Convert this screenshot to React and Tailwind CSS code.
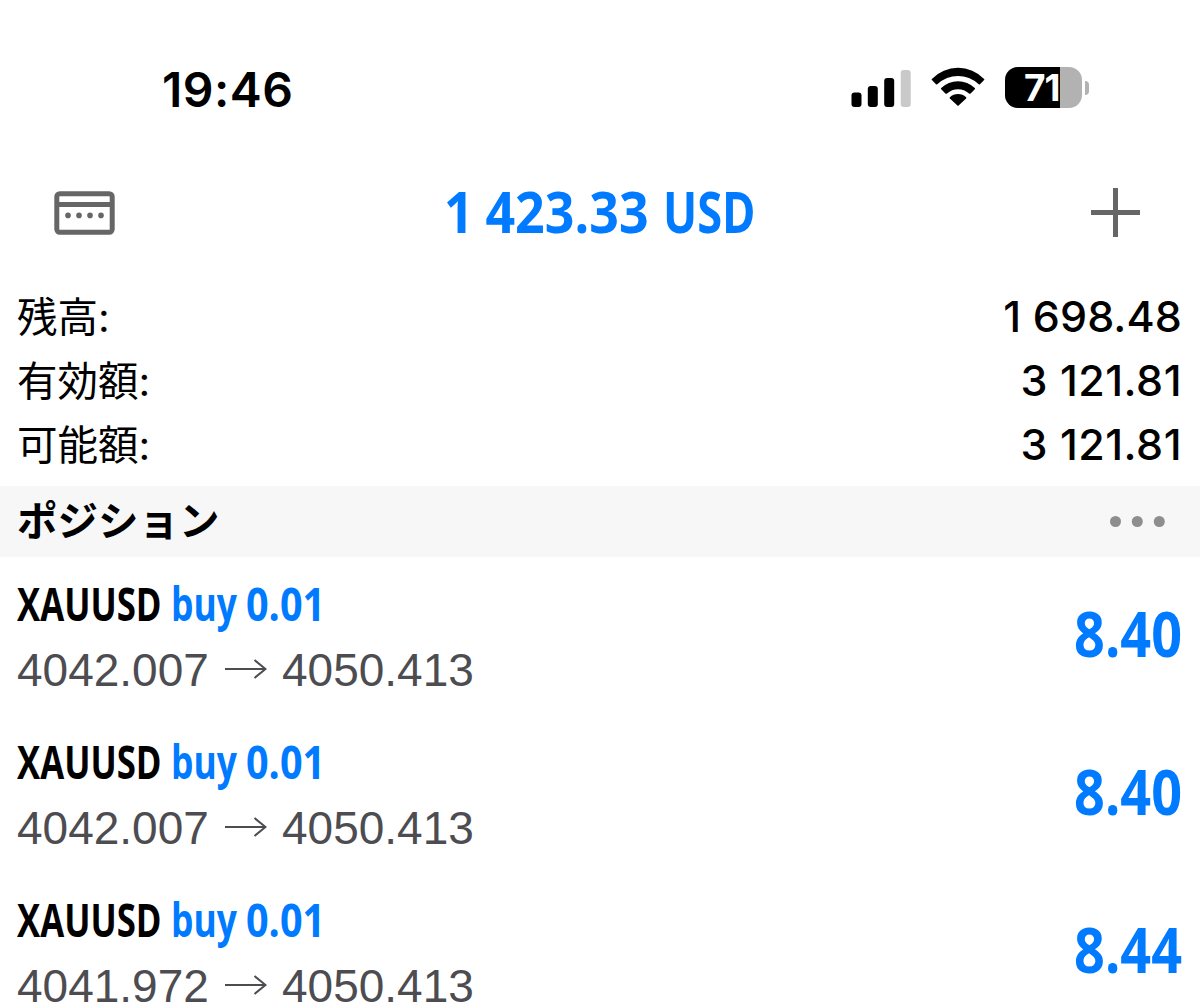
import React from 'react';

const account = [
  { label: '残高', value: '1 698.48', spacing: 'tracking-[0.1px]' },
  { label: '有効額', value: '3 121.81', spacing: 'tracking-[0.5px]' },
  { label: '可能額', value: '3 121.81', spacing: 'tracking-[0.5px]' },
];

const positions = [
  { id: 1, symbol: 'XAUUSD', side: 'buy', volume: '0.01', open: '4042.007', current: '4050.413', profit: '8.40' },
  { id: 2, symbol: 'XAUUSD', side: 'buy', volume: '0.01', open: '4042.007', current: '4050.413', profit: '8.40' },
  { id: 3, symbol: 'XAUUSD', side: 'buy', volume: '0.01', open: '4041.972', current: '4050.413', profit: '8.44' },
];

const SignalIcon = () => (
  <svg width="60" height="38" viewBox="0 0 60 38">
    <rect x="0.5" y="23.5" width="10" height="14.5" rx="3" fill="#000" />
    <rect x="16.8" y="17" width="10" height="21" rx="3" fill="#000" />
    <rect x="33.2" y="9" width="10" height="29" rx="3" fill="#000" />
    <rect x="49.7" y="1" width="10" height="37" rx="3" fill="#c9c9c9" />
  </svg>
);

const WifiIcon = () => (
  <svg className="mb-[1px]" width="54" height="40" viewBox="0 1 54 40" fill="#000">
    <path d="M0.9 12.9 A36.4 36.4 0 0 1 53.1 12.9 Q53.6 13.5 53.1 14.1 L49 18.2 Q48.2 18.9 47.4 18.1 A29.5 29.5 0 0 0 6.6 18.1 Q5.8 18.9 5 18.2 L0.9 14.1 Q0.4 13.5 0.9 12.9 Z" />
    <path d="M10.2 22.1 A24 24 0 0 1 43.8 22.1 Q44.3 22.7 43.8 23.3 L39.6 27.4 Q38.8 28.1 38 27.4 A16.3 16.3 0 0 0 16 27.4 Q15.2 28.1 14.4 27.4 L10.2 23.3 Q9.7 22.7 10.2 22.1 Z" />
    <path d="M18.9 31.2 A11.6 11.6 0 0 1 35.1 31.2 Q35.7 31.8 35.1 32.4 L27.6 39.6 Q27 40.1 26.4 39.6 L18.9 32.4 Q18.3 31.8 18.9 31.2 Z" />
  </svg>
);

const Battery = () => (
  <div className="flex items-center">
    <div className="h-[41px] w-[77px] overflow-hidden rounded-[13px] bg-[#b2b2b2]">
      <div className="flex h-full w-[55px] items-center bg-black pl-[19px]">
        <span className="shrink-0 text-[37px] leading-none font-bold tracking-[-1px] text-white">71</span>
      </div>
    </div>
    <div className="ml-[3px] h-[14px] w-[4px] rounded-r-full bg-[#b2b2b2]" />
  </div>
);

const AccountsIcon = () => (
  <svg className="mt-[2px]" width="61" height="44" viewBox="0 0 61 44">
    <rect x="2.8" y="2.7" width="55.4" height="38.6" rx="3" fill="none" stroke="#666" strokeWidth="5" />
    <rect x="3" y="11" width="55" height="5" fill="#666" />
    {[14, 25, 36, 47].map((x) => (
      <circle key={x} cx={x} cy="24.4" r="2.8" fill="#666" />
    ))}
  </svg>
);

const PlusIcon = () => (
  <svg width="49" height="49" viewBox="0 0 49 49">
    <path d="M24.5 0V49M0 24.5H49" stroke="#666" strokeWidth="5" />
  </svg>
);

const MoreIcon = () => (
  <svg width="55" height="11" viewBox="0 0 55 11" fill="#8e8e8e">
    <circle cx="5.5" cy="5.5" r="5.5" />
    <circle cx="27.3" cy="5.5" r="5.5" />
    <circle cx="49.3" cy="5.5" r="5.5" />
  </svg>
);

const ArrowIcon = () => (
  <svg className="mb-[2px]" width="42" height="20" viewBox="0 0 42 20" fill="none" stroke="#4c4c51" strokeWidth="2">
    <path d="M0 10H40M29.5 1L40.5 10L29.5 19" />
  </svg>
);

const Position = ({ item }) => (
  <div className="flex h-[158px] shrink-0 justify-between pr-[18px] pl-[17px]">
    <div className="pt-[13px]">
      <div className="flex h-[66px] items-center font-['Open_Sans',sans-serif] text-[46px] leading-none font-bold whitespace-nowrap">
        <span className="w-[154px] origin-left scale-x-[0.755]">{item.symbol}</span>
        <span className="w-[75px] origin-left scale-x-[0.77] text-[#007aff]">{item.side}</span>
        <span className="origin-left scale-x-[0.86] text-[#007aff]">{item.volume}</span>
      </div>
      <div className="flex h-[68px] items-center font-['Liberation_Sans',sans-serif] text-[46px] leading-none text-[#4c4c51]">
        <span className="w-[208px]">{item.open}</span>
        <ArrowIcon />
        <span className="ml-[15px]">{item.current}</span>
      </div>
    </div>
    <div className="flex h-[152px] items-center">
      <span className="origin-right scale-x-[0.87] font-['Open_Sans',sans-serif] text-[62px] leading-none font-bold text-[#007aff]">
        {item.profit}
      </span>
    </div>
  </div>
);

const App = () => {
  return (
    <div className="flex h-[1006px] w-[1200px] flex-col overflow-hidden bg-white font-['Inter','Noto_Sans_CJK_JP',sans-serif] text-black">
      {/* Status bar */}
      <div className="flex h-[178px] shrink-0 items-center justify-between pr-[111px] pb-[2px] pl-[162px]">
        <span className="pt-[3px] text-[48px] leading-none font-semibold tracking-[0.5px]">19:46</span>
        <div className="mb-[1px] flex items-center gap-[20px]">
          <SignalIcon />
          <WifiIcon />
          <Battery />
        </div>
      </div>

      {/* Title bar */}
      <div className="flex h-[68px] shrink-0 items-center justify-between pr-[60px] pl-[54px]">
        <AccountsIcon />
        <h1 className="mb-[2px] -ml-[4px] flex w-[315px] font-['Open_Sans',sans-serif] text-[58px] leading-none font-bold whitespace-nowrap text-[#007aff]">
          <span className="w-[219px] origin-left scale-x-[0.895] [word-spacing:-2px]">1 423.33</span>
          <span className="origin-left scale-x-[0.78]">USD</span>
        </h1>
        <PlusIcon />
      </div>

      {/* Account summary */}
      <div className="mt-[39px] shrink-0 pr-[18px] pl-[17px]">
        {account.map((row) => (
          <div key={row.label} className="flex h-[64px] items-center justify-between leading-none">
            <span className="pt-[2px] text-[40.5px]">{row.label}:</span>
            <span className={`pb-[2px] text-[43px] font-medium ${row.spacing}`}>{row.value}</span>
          </div>
        ))}
      </div>

      {/* Positions */}
      <div className="mt-[9px] flex h-[71px] shrink-0 items-center justify-between bg-[#f7f7f7] pr-[35px] pl-[17px]">
        <h2 className="pt-[2px] text-[40.5px] leading-none font-bold">ポジション</h2>
        <MoreIcon />
      </div>
      {positions.map((item) => (
        <Position key={item.id} item={item} />
      ))}
    </div>
  );
};

export default App;
